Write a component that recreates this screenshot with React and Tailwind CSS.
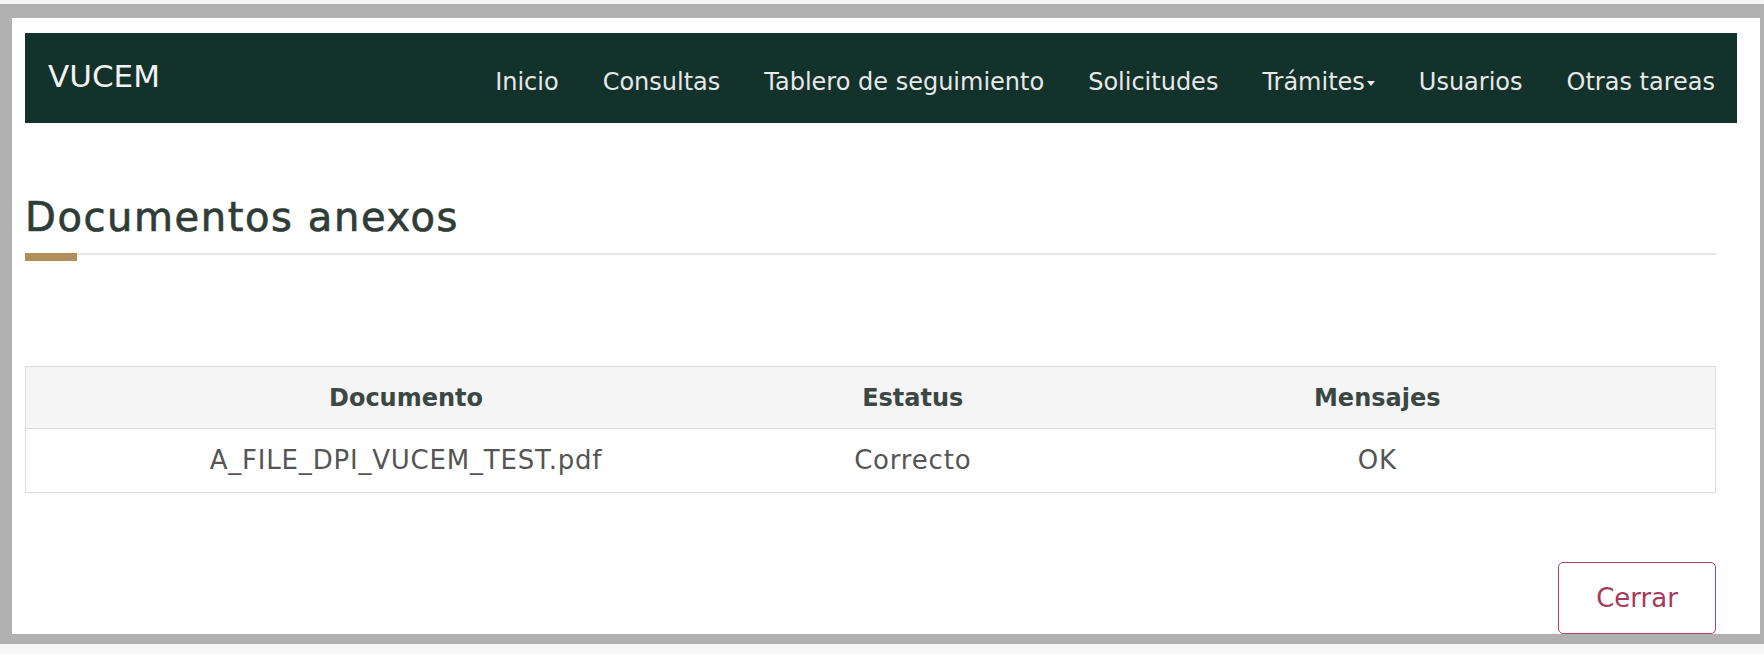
import React from 'react';

const navItems = ['Inicio', 'Consultas', 'Tablero de seguimiento', 'Solicitudes', 'Trámites', 'Usuarios', 'Otras tareas'];

const rows = [{ doc: 'A_FILE_DPI_VUCEM_TEST.pdf', status: 'Correcto', msg: 'OK' }];

export default function App() {
  return (
    <div className="w-[1764px] h-[654px] bg-[#f6f6f6] pt-[4px] overflow-hidden" style={{ fontFamily: '"DejaVu Sans", sans-serif' }}>
      {/* window frame */}
      <div className="h-[640px] border-t-[14px] border-l-[12px] border-r-[4px] border-b-[10px] border-[#b0b0b0] bg-white">
        <div className="h-full pl-[13px] pr-[23px] pt-[15px]">
          {/* Navbar */}
          <nav className="h-[90px] bg-[#13322b] flex items-start pl-[23px]">
            <span className="mt-[23px] text-[31px] leading-[40px] text-[#f2f2f2]">VUCEM</span>
            <ul className="ml-auto flex items-center pt-[33px]">
              {navItems.map((item) => (
                <li key={item} className="px-[22px] text-[24px] leading-[32px] text-[#e8e8e8] flex items-center">
                  {item}
                  {item === 'Trámites' && (
                    <span className="ml-[2px] mt-[3px] w-0 h-0 border-l-[4px] border-r-[4px] border-t-[5px] border-l-transparent border-r-transparent border-t-[#e8e8e8]" />
                  )}
                </li>
              ))}
            </ul>
          </nav>

          <div className="pr-[21px]">
            {/* Title */}
            <h2 className="mt-[70px] text-[40px] leading-[48px] tracking-[1.6px] text-[#2f3c38] [-webkit-text-stroke:0.7px_#2f3c38]">Documentos anexos</h2>
            <div className="mt-[12px] relative h-[2px] bg-[#e6e6e6]">
              <div className="absolute left-0 top-0 w-[52px] h-[8px] bg-[#b38e5d]" />
            </div>

            {/* Table */}
            <table className="mt-[111px] w-full border border-[#dddddd] border-collapse text-center">
              <thead>
                <tr className="bg-[#f5f5f5] h-[62px]">
                  <th className="w-[45%] border-b border-[#dddddd] text-[24px] font-bold text-[#3a4743]">Documento</th>
                  <th className="w-[15%] border-b border-[#dddddd] text-[24px] font-bold text-[#3a4743]">Estatus</th>
                  <th className="w-[40%] border-b border-[#dddddd] text-[24px] font-bold text-[#3a4743]">Mensajes</th>
                </tr>
              </thead>
              <tbody>
                {rows.map((r) => (
                  <tr key={r.doc} className="h-[64px] text-[26px] tracking-[0.8px] text-[#555555]">
                    <td>{r.doc}</td>
                    <td>{r.status}</td>
                    <td>{r.msg}</td>
                  </tr>
                ))}
              </tbody>
            </table>

            <div className="mt-[69px] flex justify-end">
              <button className="w-[158px] h-[72px] border-[1.5px] border-[#ad4566] rounded-[5px] text-[26px] text-[#a8385b] bg-white">
                Cerrar
              </button>
            </div>
          </div>
        </div>
      </div>
    </div>
  );
}
